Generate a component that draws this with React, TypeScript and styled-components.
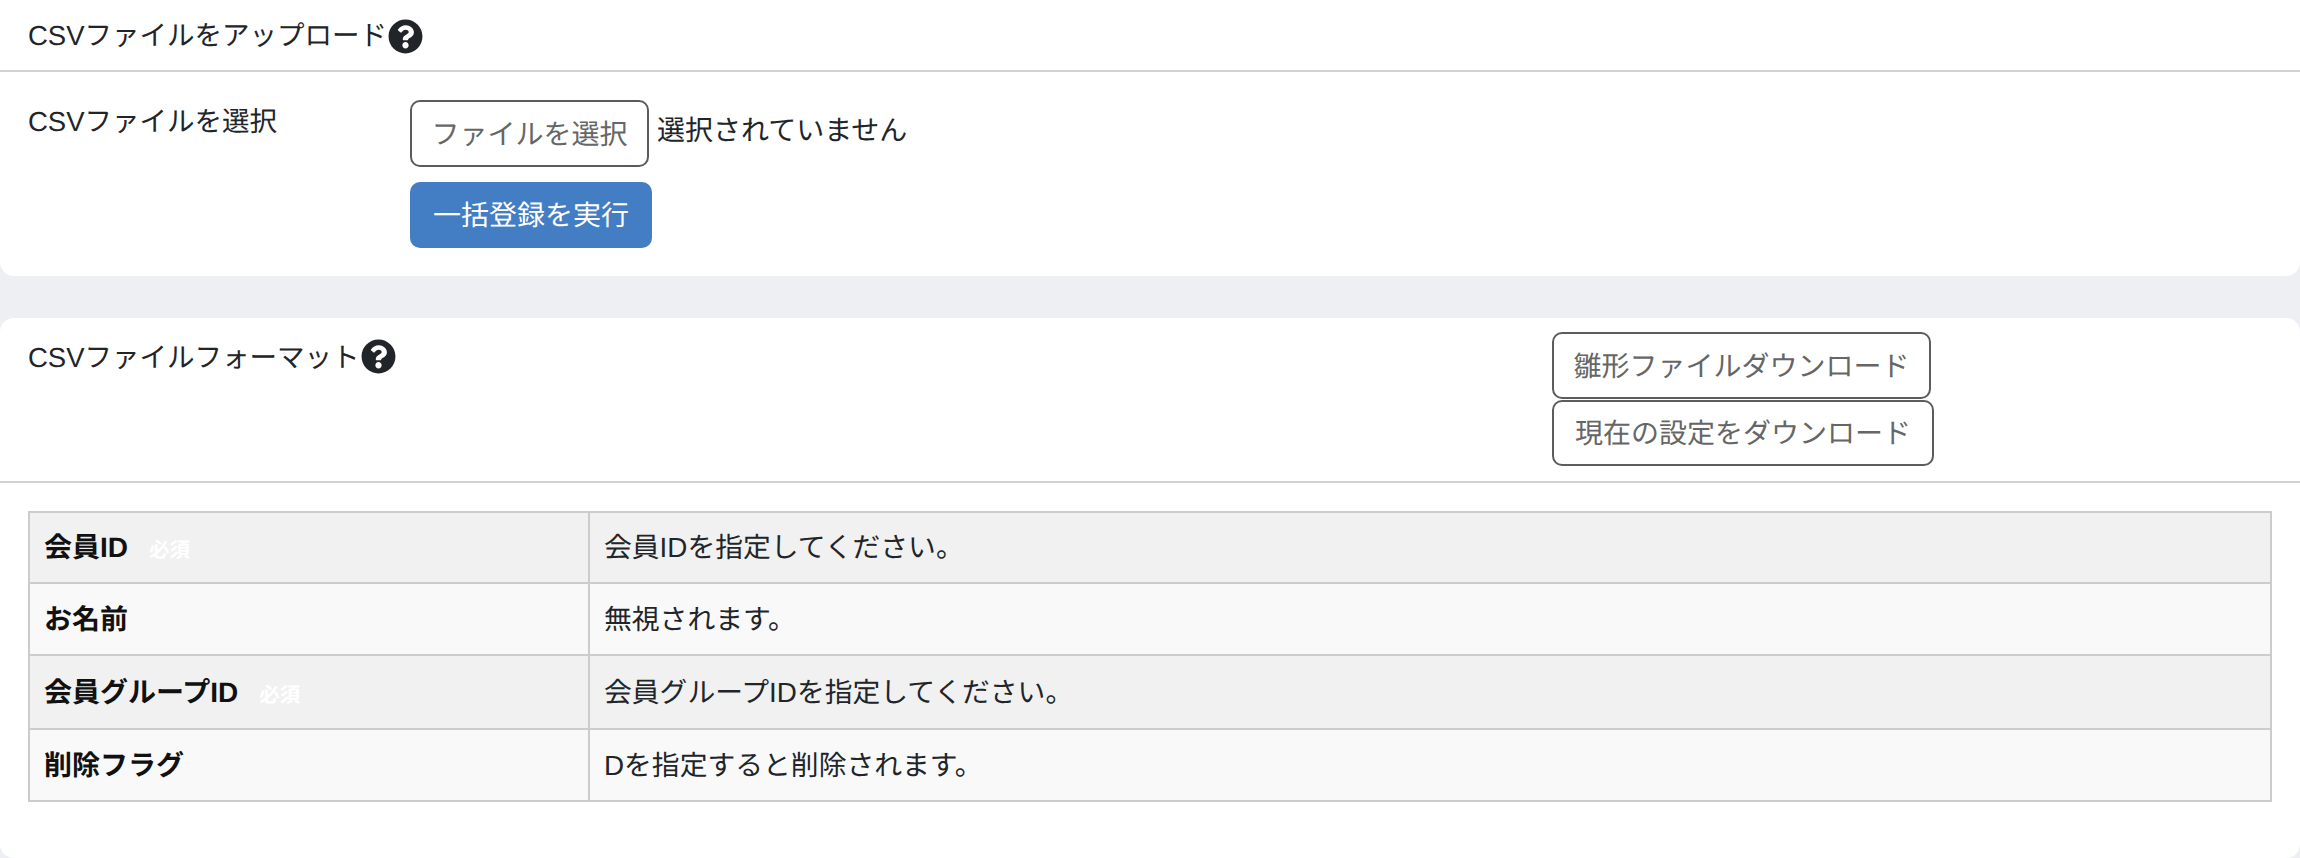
import styled, { createGlobalStyle } from 'styled-components';
import { FaQuestionCircle } from 'react-icons/fa';

const GlobalStyle = createGlobalStyle`
  html, body {
    margin: 0;
    padding: 0;
    background: #edeff3;
  }
  body {
    font-family: 'Liberation Sans', 'Noto Sans CJK JP', sans-serif;
    font-size: 28px;
    color: #212529;
    text-rendering: geometricPrecision;
  }
`;

const Page = styled.div`
  width: 2300px;
  height: 858px;
  overflow: hidden;
  display: flex;
  flex-direction: column;
  gap: 42px;
`;

const Card = styled.section<{ $top?: boolean }>`
  background: #fff;
  border-radius: ${props => (props.$top ? '0 0 14px 14px' : '14px')};
`;

const UploadCard = styled(Card)`
  height: 276px;
`;

const FormatCard = styled(Card)`
  height: 540px;
`;

const CardHeader = styled.div`
  height: 52px;
  padding: 18px 28px 0;
  border-bottom: 2px solid #d2d2d2;
  display: flex;
  align-items: flex-start;
`;

const Title = styled.h2`
  margin: 0;
  font-size: 27.5px;
  font-weight: 400;
  line-height: 36px;
  display: flex;
  align-items: center;
`;

const TitleText = styled.span<{ $shift?: number }>`
  padding-top: ${props => props.$shift || 0}px;
`;

const HelpIcon = styled(FaQuestionCircle)`
  width: 35px;
  height: 35px;
  color: #212529;
  margin-left: 1px;
`;

const FormRow = styled.div`
  display: flex;
  padding: 28px 28px 0;
`;

const FormLabel = styled.div`
  flex: 0 0 382px;
  font-size: 27.5px;
  line-height: 40px;
  padding-top: 2px;
`;

const FormControls = styled.div`
  display: flex;
  flex-direction: column;
  align-items: flex-start;
  gap: 15px;
`;

const FileRow = styled.div`
  display: flex;
  align-items: center;
  gap: 8px;
`;

const FileStatus = styled.span`
  line-height: 40px;
  margin-top: -5px;
`;

const OutlineButton = styled.button<{ $width: number; $height: number }>`
  width: ${props => props.$width}px;
  height: ${props => props.$height}px;
  box-sizing: border-box;
  padding: 0 0 2px;
  background: #fff;
  border: 2px solid #5c5c5c;
  border-radius: 10px;
  color: #666;
  font-family: inherit;
  font-size: 28px;
  text-rendering: geometricPrecision;
`;

const PrimaryButton = styled.button`
  width: 242px;
  height: 66px;
  padding: 0 0 2px;
  background: #437dc4;
  border: none;
  border-radius: 10px;
  color: #fff;
  font-family: inherit;
  font-size: 28px;
  text-rendering: geometricPrecision;
`;

const FormatHeader = styled.div`
  height: 163px;
  padding: 0 28px;
  border-bottom: 2px solid #d2d2d2;
  display: flex;
`;

const FormatTitleCell = styled.div`
  flex: 0 0 1524px;
  padding-top: 19px;
`;

const DownloadGroup = styled.div`
  display: flex;
  flex-direction: column;
  align-items: flex-start;
  padding-top: 14px;
  gap: 1px;
`;

const TableWrap = styled.div`
  padding: 28px 28px 0;
`;

const Table = styled.table`
  width: 2244px;
  table-layout: fixed;
  border-collapse: collapse;
  border: 2px solid #ccc;
`;

const Row = styled.tr<{ $odd: boolean; $height: number }>`
  height: ${props => props.$height}px;
  background: ${props => (props.$odd ? '#f1f1f1' : '#f9f9f9')};
`;

const NameCell = styled.th`
  width: 560px;
  box-sizing: border-box;
  padding: 0 14px 3px;
  border: 2px solid #ccc;
  font-size: 28px;
  font-weight: 700;
  text-align: left;
  color: #111;
`;

const DescCell = styled.td`
  padding: 0 14px 3px;
  border: 2px solid #ccc;
  font-size: 27.8px;
`;

const RequiredBadge = styled.span`
  margin-left: 21px;
  font-size: 20.5px;
  font-weight: 700;
  color: #fff;
`;

const rows = [
  { name: '会員ID', required: true, desc: '会員IDを指定してください。', height: 71 },
  { name: 'お名前', required: false, desc: '無視されます。', height: 72 },
  { name: '会員グループID', required: true, desc: '会員グループIDを指定してください。', height: 74 },
  { name: '削除フラグ', required: false, desc: 'Dを指定すると削除されます。', height: 72 },
];

export default function App() {
  return (
    <Page>
      <GlobalStyle />
      <UploadCard $top>
        <CardHeader>
          <Title>CSVファイルをアップロード<HelpIcon /></Title>
        </CardHeader>
        <FormRow>
          <FormLabel>CSVファイルを選択</FormLabel>
          <FormControls>
            <FileRow>
              <OutlineButton $width={239} $height={67}>ファイルを選択</OutlineButton>
              <FileStatus>選択されていません</FileStatus>
            </FileRow>
            <PrimaryButton>一括登録を実行</PrimaryButton>
          </FormControls>
        </FormRow>
      </UploadCard>
      <FormatCard>
        <FormatHeader>
          <FormatTitleCell>
            <Title><TitleText $shift={3}>CSVファイルフォーマット</TitleText><HelpIcon /></Title>
          </FormatTitleCell>
          <DownloadGroup>
            <OutlineButton $width={379} $height={67}>雛形ファイルダウンロード</OutlineButton>
            <OutlineButton $width={382} $height={66}>現在の設定をダウンロード</OutlineButton>
          </DownloadGroup>
        </FormatHeader>
        <TableWrap>
          <Table>
            <tbody>
              {rows.map((row, i) => (
                <Row key={row.name} $odd={i % 2 === 0} $height={row.height}>
                  <NameCell>
                    {row.name}
                    {row.required && <RequiredBadge>必須</RequiredBadge>}
                  </NameCell>
                  <DescCell>{row.desc}</DescCell>
                </Row>
              ))}
            </tbody>
          </Table>
        </TableWrap>
      </FormatCard>
    </Page>
  );
}
